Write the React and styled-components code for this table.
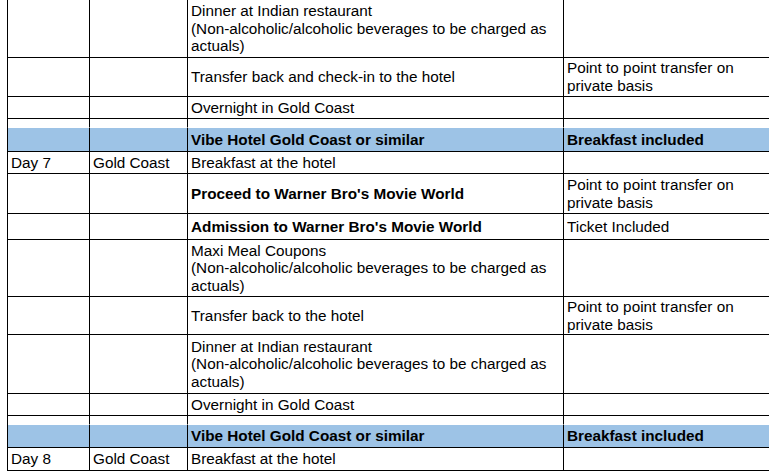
import React from "react";
import styled, { createGlobalStyle } from "styled-components";

const GlobalStyle = createGlobalStyle`
  html, body {
    margin: 0;
    padding: 0;
    background: #ffffff;
    overflow: hidden;
  }
`;

const Table = styled.table`
  margin-left: 7px;
  border-collapse: separate;
  border-spacing: 0;
  table-layout: fixed;
  width: 774px;
  border-left: 1px solid #000;
  font-family: "Liberation Sans", Arial, sans-serif;
  font-size: 15.3px;
  line-height: 1.15;
  color: #000;
`;

const Col = styled.col`
  width: ${({ $w }) => $w}px;
`;

const Row = styled.tr`
  height: ${({ $h }) => $h}px;
  background: ${({ $band }) => ($band ? "#9dc3e6" : "transparent")};
`;

const Cell = styled.td`
  padding: 0 3px;
  border-right: 1px solid #000;
  border-bottom: 1px solid ${({ $open }) => ($open ? "transparent" : "#000")};
  vertical-align: middle;
  font-weight: ${({ $bold }) => ($bold ? 700 : 400)};
  overflow: hidden;
`;

const NOTE = "(Non-alcoholic/alcoholic beverages to be charged as actuals)";
const TRANSFER = "Point to point transfer on private basis";

const columns = [82, 98, 376, 217];

const rows = [
  { h: 58, c: ["", "", ["Dinner at Indian restaurant", NOTE], ""] },
  { h: 39, c: ["", "", "Transfer back and check-in to the hotel", TRANSFER] },
  { h: 22, c: ["", "", "Overnight in Gold Coast", ""] },
  { h: 9, gap: true, c: ["", "", "", ""] },
  { h: 24, band: true, c: ["", "", "Vibe Hotel Gold Coast or similar", "Breakfast included"] },
  { h: 22, c: ["Day 7", "Gold Coast", "Breakfast at the hotel", ""] },
  { h: 40, bold: true, c: ["", "", "Proceed to Warner Bro's Movie World", TRANSFER] },
  { h: 26, bold: true, c: ["", "", "Admission to Warner Bro's Movie World", "Ticket Included"] },
  { h: 57, c: ["", "", ["Maxi Meal Coupons", NOTE], ""] },
  { h: 38, c: ["", "", "Transfer back to the hotel", TRANSFER] },
  { h: 59, c: ["", "", ["Dinner at Indian restaurant", NOTE], ""] },
  { h: 22, c: ["", "", "Overnight in Gold Coast", ""] },
  { h: 9, gap: true, c: ["", "", "", ""] },
  { h: 23, band: true, c: ["", "", "Vibe Hotel Gold Coast or similar", "Breakfast included"] },
  { h: 23, c: ["Day 8", "Gold Coast", "Breakfast at the hotel", ""] },
  { h: 22, c: ["", "", "", ""] },
];

const renderText = (value) =>
  Array.isArray(value)
    ? value.map((line, i) => (
        <React.Fragment key={i}>
          {i > 0 && <br />}
          {line}
        </React.Fragment>
      ))
    : value;

export default function App() {
  return (
    <>
      <GlobalStyle />
      <Table>
        <colgroup>
          {columns.map((w, i) => (
            <Col key={i} $w={w} />
          ))}
        </colgroup>
        <tbody>
          {rows.map((row, r) => (
            <Row key={r} $h={row.h} $band={row.band}>
              {row.c.map((text, i) => (
                <Cell
                  key={i}
                  $open={row.gap}
                  $bold={row.band || (row.bold && i === 2)}
                >
                  {renderText(text)}
                </Cell>
              ))}
            </Row>
          ))}
        </tbody>
      </Table>
    </>
  );
}
